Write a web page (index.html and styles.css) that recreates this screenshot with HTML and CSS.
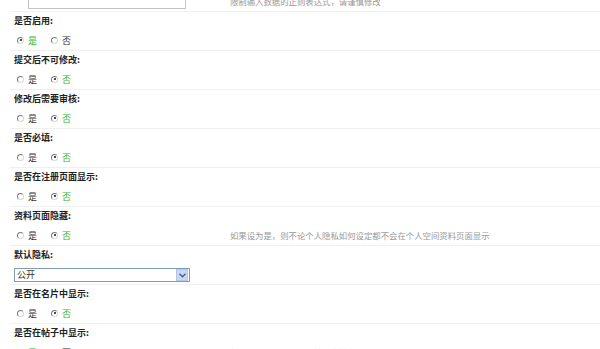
FILE: index.html
```html
<!DOCTYPE html>
<html lang="zh-CN">
  <head>
    <meta charset="UTF-8" />
    <title>栏目设置</title>
    <link rel="stylesheet" href="styles.css">
  </head>
  <body>
    <div class="form-table">
      <div class="row-value first">
        <div class="field"><span class="text-input"></span></div>
        <div class="tips">限制输入数据的正则表达式，请谨慎修改</div>
      </div>

      <div class="row-label">是否启用:</div>
      <div class="row-value">
        <div class="field">
          <span class="radio checked"></span><span class="opt on">是</span>
          <span class="radio"></span><span class="opt">否</span>
        </div>
      </div>

      <div class="row-label">提交后不可修改:</div>
      <div class="row-value">
        <div class="field">
          <span class="radio"></span><span class="opt">是</span>
          <span class="radio checked"></span><span class="opt on">否</span>
        </div>
      </div>

      <div class="row-label">修改后需要审核:</div>
      <div class="row-value">
        <div class="field">
          <span class="radio"></span><span class="opt">是</span>
          <span class="radio checked"></span><span class="opt on">否</span>
        </div>
      </div>

      <div class="row-label">是否必填:</div>
      <div class="row-value">
        <div class="field">
          <span class="radio"></span><span class="opt">是</span>
          <span class="radio checked"></span><span class="opt on">否</span>
        </div>
      </div>

      <div class="row-label">是否在注册页面显示:</div>
      <div class="row-value">
        <div class="field">
          <span class="radio"></span><span class="opt">是</span>
          <span class="radio checked"></span><span class="opt on">否</span>
        </div>
      </div>

      <div class="row-label">资料页面隐藏:</div>
      <div class="row-value">
        <div class="field">
          <span class="radio"></span><span class="opt">是</span>
          <span class="radio checked"></span><span class="opt on">否</span>
        </div>
        <div class="tips">如果设为是，则不论个人隐私如何设定都不会在个人空间资料页面显示</div>
      </div>

      <div class="row-label">默认隐私:</div>
      <div class="row-value">
        <div class="select-field">
          <span class="select-text">公开</span>
          <span class="select-btn">
            <svg width="7" height="5" viewBox="0 0 7 5"><path d="M0.5 0.8 L3.5 3.8 L6.5 0.8" fill="none" stroke="#4d6185" stroke-width="1.4"/></svg>
          </span>
        </div>
      </div>

      <div class="row-label">是否在名片中显示:</div>
      <div class="row-value">
        <div class="field">
          <span class="radio"></span><span class="opt">是</span>
          <span class="radio checked"></span><span class="opt on">否</span>
        </div>
      </div>

      <div class="row-label">是否在帖子中显示:</div>
      <div class="row-value">
        <div class="field">
          <span class="radio checked"></span><span class="opt on">是</span>
          <span class="radio"></span><span class="opt">否</span>
        </div>
        <div class="tips">如果设为是，则用户在帖子中将会显示该项资料</div>
      </div>
    </div>
  </body>
</html>
```

FILE: styles.css
```css
* {
  margin: 0;
  padding: 0;
  box-sizing: border-box;
}

body {
  font-family: "Noto Sans CJK SC", "DejaVu Sans", sans-serif;
  font-size: 9px;
  color: #333;
  background-color: #fff;
  overflow: hidden;
}

.form-table {
  padding-left: 10px;
}

.row-label {
  border-top: 1px solid #f0f0f0;
  height: 17px;
  padding: 2px 0 0 4px;
  line-height: 14px;
  font-weight: bold;
  color: #222;
}

.row-value {
  display: flex;
  align-items: center;
  height: 22px;
}

.row-value.first {
  margin-top: -11px;
}

.field {
  width: 220px;
  display: flex;
  align-items: center;
  padding-left: 7px;
  padding-top: 2px;
}

.text-input {
  display: block;
  margin-left: 11px;
  width: 158px;
  height: 16px;
  border: 1px solid #c4c4c4;
  background-color: #fff;
}

.radio {
  display: inline-block;
  width: 7px;
  height: 7px;
  border-radius: 50%;
  border: 1px solid;
  border-color: #7a7a7a #d8d8d8 #d8d8d8 #7a7a7a;
  position: relative;
  margin-right: 4px;
}

.radio.checked::after {
  content: "";
  position: absolute;
  left: 1.5px;
  top: 1.5px;
  width: 2px;
  height: 2px;
  border-radius: 50%;
  background-color: #111;
}

.opt {
  margin-right: 14px;
  color: #333;
}

.opt.on {
  color: #2fb82f;
}

.tips {
  color: #999;
  font-size: 8.4px;
  padding-top: 2px;
}

.select-field {
  display: flex;
  align-items: center;
  margin-left: 4px;
  margin-top: 4px;
  width: 176px;
  height: 14px;
  border: 1px solid #7f9db9;
  background-color: #fff;
}

.select-text {
  flex: 1;
  padding-left: 2px;
  line-height: 12px;
}

.select-btn {
  display: flex;
  align-items: center;
  justify-content: center;
  width: 12px;
  height: 12px;
  margin-right: 1px;
  background-color: #c9d8f6;
  border: 1px solid #b4c6ec;
}
```
